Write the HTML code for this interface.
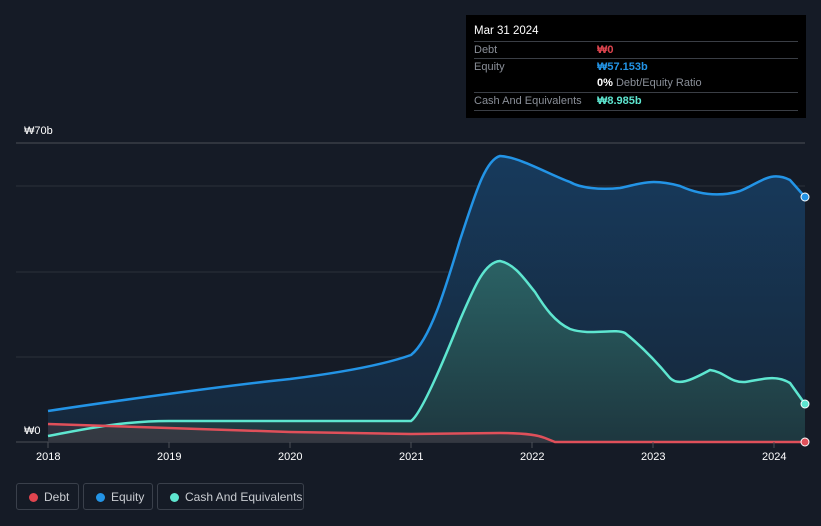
<!DOCTYPE html>
<html><head><meta charset="utf-8"><style>
body{margin:0;width:821px;height:526px;background:#151b26;font-family:"Liberation Sans",sans-serif;overflow:hidden;position:relative}
.tt{position:absolute;left:466px;top:15px;width:340px;height:103px;background:#000;font-size:11px;color:#8a8f98}
.tt .h{position:absolute;left:8px;top:10px;color:#fff;font-size:11.5px}
.row{position:absolute;left:8px;width:324px;border-top:1px solid #3a3e45;height:17px;line-height:17px}
.row span{position:absolute;left:123px;font-weight:bold}
.lg{position:absolute;top:483px;height:27px;border:1px solid #3a404b;border-radius:3px;color:#c9ccd1;font-size:12px;line-height:27px;box-sizing:border-box}
.lg i{position:absolute;left:12px;top:9px;width:9px;height:9px;border-radius:50%}
.lg b{font-weight:normal;position:absolute;left:27px}
.ax{position:absolute;color:#fff;font-size:11px}
</style></head><body>
<svg width="821" height="526" style="position:absolute;left:0;top:0">
<defs><linearGradient id="g1" x1="0" y1="0" x2="0" y2="1"><stop offset="0" stop-color="#173a5c"/><stop offset="1" stop-color="#16273a"/></linearGradient>
<linearGradient id="g2" x1="0" y1="0" x2="0" y2="1"><stop offset="0" stop-color="#2e6a68"/><stop offset="1" stop-color="#1f3a40"/></linearGradient></defs>
<line x1="16" y1="143" x2="805" y2="143" stroke="#4a4f57"/>
<line x1="16" y1="186" x2="805" y2="186" stroke="#2a303a"/>
<line x1="16" y1="272" x2="805" y2="272" stroke="#2a303a"/>
<line x1="16" y1="357" x2="805" y2="357" stroke="#2a303a"/>
<line x1="16" y1="442" x2="805" y2="442" stroke="#4a4f57"/>
<path d="M48,411 C100,403 230,385 290,379 C330,374 380,366 411,355 C430,340 445,290 460,240 C475,195 485,160 500,156 C520,157 550,175 570,182 C580,188 600,190 620,188 C640,184 650,178 680,186 C700,195 720,197 740,191 C760,183 770,170 790,180 L805,197 L805,442 L48,442Z" fill="url(#g1)"/>
<path d="M48,436 C80,430 120,421 169,421 L411,421 C420,415 440,370 460,320 C475,285 485,262 500,261 C515,264 525,280 535,292 C545,308 555,322 570,329 C590,336 615,328 625,333 C640,345 655,360 670,378 C678,386 690,381 710,370 C725,372 730,383 745,382 C760,380 775,374 790,383 L805,404 L805,442 L48,442Z" fill="url(#g2)" opacity="0.85"/>
<path d="M48,424 L290,432 L411,434 L500,433 C520,433 535,434 545,438 L555,442 L805,442 L805,442 L48,442Z" fill="#4a3a44" opacity="0.5"/>
<path d="M48,411 C100,403 230,385 290,379 C330,374 380,366 411,355 C430,340 445,290 460,240 C475,195 485,160 500,156 C520,157 550,175 570,182 C580,188 600,190 620,188 C640,184 650,178 680,186 C700,195 720,197 740,191 C760,183 770,170 790,180 L805,197" fill="none" stroke="#2394e6" stroke-width="2.5"/>
<path d="M48,436 C80,430 120,421 169,421 L411,421 C420,415 440,370 460,320 C475,285 485,262 500,261 C515,264 525,280 535,292 C545,308 555,322 570,329 C590,336 615,328 625,333 C640,345 655,360 670,378 C678,386 690,381 710,370 C725,372 730,383 745,382 C760,380 775,374 790,383 L805,404" fill="none" stroke="#5ee6d0" stroke-width="2.5"/>
<path d="M48,424 L290,432 L411,434 L500,433 C520,433 535,434 545,438 L555,442 L805,442" fill="none" stroke="#e0505a" stroke-width="2.5"/>
<circle cx="805" cy="197" r="4" fill="#2394e6" stroke="#fff" stroke-width="1"/>
<circle cx="805" cy="404" r="4" fill="#5ee6d0" stroke="#fff" stroke-width="1"/>
<circle cx="805" cy="442" r="4" fill="#e0505a" stroke="#fff" stroke-width="1"/>
<g stroke="#4a4f57"><line x1="48" y1="442" x2="48" y2="448"/><line x1="169" y1="442" x2="169" y2="448"/><line x1="290" y1="442" x2="290" y2="448"/><line x1="411" y1="442" x2="411" y2="448"/><line x1="532" y1="442" x2="532" y2="448"/><line x1="653" y1="442" x2="653" y2="448"/><line x1="774" y1="442" x2="774" y2="448"/></g>
</svg>
<div class="ax" style="left:24px;top:125px">₩70b</div>
<div class="ax" style="left:24px;top:425px">₩0</div>
<div class="ax" style="left:36px;top:451px">2018</div>
<div class="ax" style="left:157px;top:451px">2019</div>
<div class="ax" style="left:278px;top:451px">2020</div>
<div class="ax" style="left:399px;top:451px">2021</div>
<div class="ax" style="left:520px;top:451px">2022</div>
<div class="ax" style="left:641px;top:451px">2023</div>
<div class="ax" style="left:762px;top:451px">2024</div>
<div class="tt"><div class="h">Mar 31 2024</div>
<div class="row" style="top:26px">Debt<span style="color:#e0454f">₩0</span></div>
<div class="row" style="top:43px">Equity<span style="color:#2394e6">₩57.153b</span></div>
<div class="row" style="top:60px;border-top:none"><span style="color:#fff">0% <b style="font-weight:normal;color:#8a8f98">Debt/Equity Ratio</b></span></div>
<div class="row" style="top:77px;border-bottom:1px solid #3a3e45">Cash And Equivalents<span style="color:#5ee6d0">₩8.985b</span></div>
</div>
<div class="lg" style="left:16px;width:63px"><i style="background:#e0454f"></i><b>Debt</b></div>
<div class="lg" style="left:83px;width:70px"><i style="background:#2394e6"></i><b>Equity</b></div>
<div class="lg" style="left:157px;width:147px"><i style="background:#5ee6d0"></i><b>Cash And Equivalents</b></div>
</body></html>
